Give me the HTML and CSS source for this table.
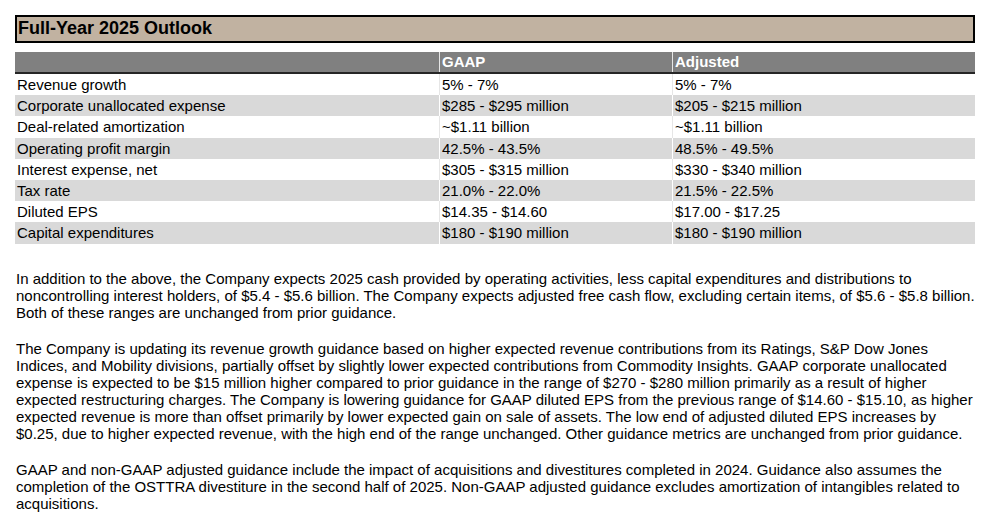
FILE: index.html
```html
<!DOCTYPE html>
<html>
<head>
<meta charset="utf-8">
<link rel="stylesheet" href="styles.css">
</head>
<body>
<div class="page">
  <div class="title">Full-Year 2025 Outlook</div>
  <table class="outlook">
    <thead>
      <tr><th class="label"></th><th class="gaap">GAAP</th><th class="adj">Adjusted</th></tr>
    </thead>
    <tbody>
      <tr><td>Revenue growth</td><td>5% - 7%</td><td>5% - 7%</td></tr>
      <tr class="alt"><td>Corporate unallocated expense</td><td>$285 - $295 million</td><td>$205 - $215 million</td></tr>
      <tr><td>Deal-related amortization</td><td>~$1.11 billion</td><td>~$1.11 billion</td></tr>
      <tr class="alt"><td>Operating profit margin</td><td>42.5% - 43.5%</td><td>48.5% - 49.5%</td></tr>
      <tr><td>Interest expense, net</td><td>$305 - $315 million</td><td>$330 - $340 million</td></tr>
      <tr class="alt"><td>Tax rate</td><td>21.0% - 22.0%</td><td>21.5% - 22.5%</td></tr>
      <tr><td>Diluted EPS</td><td>$14.35 - $14.60</td><td>$17.00 - $17.25</td></tr>
      <tr class="alt"><td>Capital expenditures</td><td>$180 - $190 million</td><td>$180 - $190 million</td></tr>
    </tbody>
  </table>
  <p>In addition to the above, the Company expects 2025 cash provided by operating activities, less capital expenditures and distributions to noncontrolling interest holders, of $5.4 - $5.6 billion. The Company expects adjusted free cash flow, excluding certain items, of $5.6 - $5.8 billion. Both of these ranges are unchanged from prior guidance.</p>
  <p>The Company is updating its revenue growth guidance based on higher expected revenue contributions from its Ratings, S&amp;P Dow Jones Indices, and Mobility divisions, partially offset by slightly lower expected contributions from Commodity Insights. GAAP corporate unallocated expense is expected to be $15 million higher compared to prior guidance in the range of $270 - $280 million primarily as a result of higher expected restructuring charges. The Company is lowering guidance for GAAP diluted EPS from the previous range of $14.60 - $15.10, as higher expected revenue is more than offset primarily by lower expected gain on sale of assets. The low end of adjusted diluted EPS increases by $0.25, due to higher expected revenue, with the high end of the range unchanged. Other guidance metrics are unchanged from prior guidance.</p>
  <p>GAAP and non-GAAP adjusted guidance include the impact of acquisitions and divestitures completed in 2024. Guidance also assumes the completion of the OSTTRA divestiture in the second half of 2025. Non-GAAP adjusted guidance excludes amortization of intangibles related to acquisitions.</p>
</div>
</body>
</html>
```
FILE: styles.css
```css
html, body {
  margin: 0;
  padding: 0;
  background: #ffffff;
}
body {
  font-family: "Liberation Sans", Arial, sans-serif;
  color: #000000;
}
.page {
  width: 960px;
  padding: 15px 0 0 15px;
}
.title {
  height: 24px;
  border: 2px solid #000000;
  background: #c1b2a1;
  font-size: 18px;
  font-weight: bold;
  line-height: 23px;
  padding-left: 1px;
}
.outlook {
  margin-top: 9px;
  width: 960px;
  border-collapse: collapse;
  border-spacing: 0;
  font-size: 15px;
  table-layout: fixed;
}
.outlook th {
  background: #808080;
  color: #ffffff;
  font-weight: bold;
  text-align: left;
  height: 20px;
  padding: 0 2px;
  border-bottom: 2px solid #262626;
  line-height: 20px;
}
.outlook th.label { width: 420px; }
.outlook th.gaap { width: 228px; }
.outlook th + th,
.outlook td + td {
  border-left: 1px solid #e6e6e6;
}
.outlook td {
  height: 21.2px;
  padding: 0 2px;
  line-height: 21px;
  white-space: nowrap;
}
.outlook tr.alt td {
  background: #d9d9d9;
}
.outlook tr.alt td + td {
  border-left-color: #ffffff;
}
p {
  margin: 0;
  padding-left: 1px;
  font-size: 15px;
  line-height: 17px;
  width: 960px;
}
.outlook + p {
  margin-top: 26px;
}
p + p {
  margin-top: 19px;
}
```
